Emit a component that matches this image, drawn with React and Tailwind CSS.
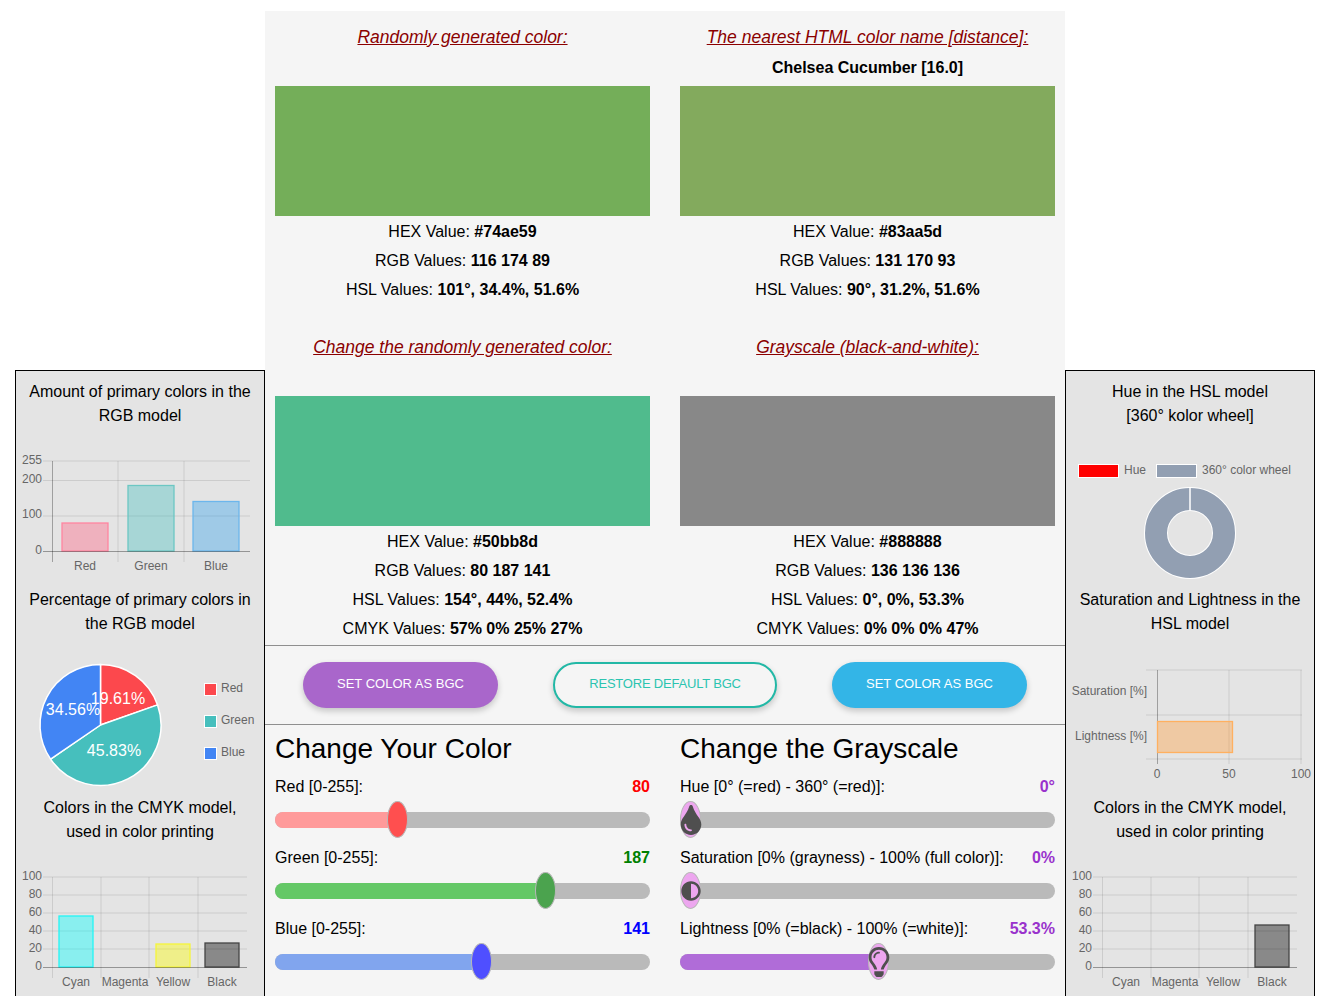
import React from "react";
import { FaTint, FaAdjust, FaRegLightbulb } from "react-icons/fa";

const G = "rgba(0,0,0,0.1)";
const Z = "rgba(0,0,0,0.3)";
const L = "#666";

function T({ x, y, a = "middle", c = L, s = 12, children }) {
  return <text x={x} y={y} textAnchor={a} fill={c} fontSize={s}>{children}</text>;
}

function RgbBars() {
  return (
    <svg width="248" height="160" viewBox="16 427 248 160" className="block">
      {[[461, "255", 464], [480.5, "200", 483], [516, "100", 518]].map(([y, t, ty]) => (
        <g key={t}>
          <line x1="43" x2="250" y1={y} y2={y} stroke={G} />
          <T x="42" y={ty} a="end">{t}</T>
        </g>
      ))}
      <T x="42" y="554" a="end">0</T>
      {[118, 184].map((x) => <line key={x} x1={x} x2={x} y1="461" y2="562" stroke={G} />)}
      <line x1="52.5" x2="52.5" y1="461" y2="562" stroke={Z} />
      <rect x="62" y="523" width="46" height="28" fill="rgba(255,99,132,0.4)" stroke="#ff85a0" strokeWidth="1.3" />
      <rect x="128" y="485.5" width="46" height="65.5" fill="rgba(75,192,192,0.4)" stroke="#6cc7c3" strokeWidth="1.3" />
      <rect x="193" y="501.5" width="46" height="49.5" fill="rgba(54,162,235,0.4)" stroke="#6cb6ec" strokeWidth="1.3" />
      <line x1="43" x2="250" y1="551.5" y2="551.5" stroke="rgba(0,0,0,0.35)" />
      <T x="85" y="570">Red</T>
      <T x="151" y="570">Green</T>
      <T x="216" y="570">Blue</T>
    </svg>
  );
}

function polar(cx, cy, r, p) {
  const a = (p / 100) * 2 * Math.PI - Math.PI / 2;
  return [cx + r * Math.cos(a), cy + r * Math.sin(a)];
}

function Slice({ from, to, fill }) {
  const [x1, y1] = polar(100.5, 725, 60.5, from);
  const [x2, y2] = polar(100.5, 725, 60.5, to);
  const large = to - from > 50 ? 1 : 0;
  return <path d={`M100.5 725 L${x1} ${y1} A60.5 60.5 0 ${large} 1 ${x2} ${y2} Z`} fill={fill} stroke="#fff" strokeWidth="1.5" />;
}

function Pie() {
  return (
    <svg width="248" height="160" viewBox="16 635 248 160" className="block">
      <Slice from={0} to={19.61} fill="#fc484d" />
      <Slice from={19.61} to={65.44} fill="#46bfbd" />
      <Slice from={65.44} to={100} fill="#4285f4" />
      <T x="118" y="704" c="#fff" s={16}>19.61%</T>
      <T x="114" y="756" c="#fff" s={16}>45.83%</T>
      <T x="73" y="715" c="#fff" s={16}>34.56%</T>
      {[[683, "#fc484d", "Red"], [715, "#46bfbd", "Green"], [747, "#4285f4", "Blue"]].map(([y, f, t]) => (
        <g key={t}>
          <rect x="204.5" y={y + 0.5} width="12" height="12" fill={f} stroke="#fff" />
          <T x="221" y={y + 9} a="start">{t}</T>
        </g>
      ))}
    </svg>
  );
}

function CmykBars({ bars }) {
  return (
    <svg width="248" height="160" viewBox="16 843 248 160" className="block">
      {[[877, "100"], [895, "80"], [913, "60"], [931, "40"], [949, "20"]].map(([y, t]) => (
        <g key={t}>
          <line x1="43" x2="247" y1={y} y2={y} stroke={G} />
          <T x="42" y={y + 3} a="end">{t}</T>
        </g>
      ))}
      <T x="42" y="970" a="end">0</T>
      {[101, 149, 198].map((x) => <line key={x} x1={x} x2={x} y1="877" y2="978" stroke={G} />)}
      <line x1="52.5" x2="52.5" y1="877" y2="978" stroke={G} />
      {bars.map((b) => (
        <rect key={b.x} x={b.x} y={b.y} width="34" height={967 - b.y} fill={b.f} stroke={b.s} strokeWidth="1.3" />
      ))}
      <line x1="43" x2="247" y1="967.5" y2="967.5" stroke="rgba(0,0,0,0.35)" />
      <T x="76" y="986">Cyan</T>
      <T x="125" y="986">Magenta</T>
      <T x="173" y="986">Yellow</T>
      <T x="222" y="986">Black</T>
    </svg>
  );
}

function Donut() {
  return (
    <svg width="248" height="160" viewBox="1066 427 248 160" className="block">
      <rect x="1078.5" y="464.5" width="40" height="13" fill="#ff0000" stroke="#fff" />
      <T x="1124" y="474" a="start">Hue</T>
      <rect x="1156.5" y="464.5" width="40" height="13" fill="#929fb2" stroke="#fff" />
      <T x="1202" y="474" a="start">360° color wheel</T>
      <circle cx="1190" cy="533" r="34" fill="none" stroke="#fff" strokeWidth="24" />
      <circle cx="1190" cy="533" r="34" fill="none" stroke="#929fb2" strokeWidth="22" />
      <line x1="1190" x2="1190" y1="488" y2="510" stroke="#fff" strokeWidth="1.5" />
    </svg>
  );
}

function HBars() {
  return (
    <svg width="248" height="160" viewBox="1066 635 248 160" className="block">
      {[670, 715, 759].map((y) => <line key={y} x1="1146" x2="1302" y1={y} y2={y} stroke={G} />)}
      {[1229, 1301].map((x) => <line key={x} x1={x} x2={x} y1="670" y2="764" stroke={G} />)}
      <line x1="1157.5" x2="1157.5" y1="670" y2="764" stroke="rgba(0,0,0,0.3)" />
      <rect x="1157.5" y="721.5" width="75" height="31" fill="rgba(255,159,64,0.4)" stroke="#ffb060" strokeWidth="1.3" />
      <T x="1147" y="695" a="end">Saturation [%]</T>
      <T x="1147" y="740" a="end">Lightness [%]</T>
      <T x="1157" y="778">0</T>
      <T x="1229" y="778">50</T>
      <T x="1301" y="778">100</T>
    </svg>
  );
}

function ChartBlock({ title, children }) {
  return (
    <div className="h-[208px]">
      <h4 className="h-[48px] pt-[1px] text-center text-[16px] leading-[24px] text-black">{title}</h4>
      {children}
    </div>
  );
}

function Sidebar({ children }) {
  return (
    <aside className="mt-[359px] h-[640px] w-[250px] shrink-0 border border-black bg-[#e4e4e4] pt-[8px]">
      {children}
    </aside>
  );
}

function Line({ label, value }) {
  return (
    <p className="text-center text-[16px] leading-[29px] text-black">
      {label} <b>{value}</b>
    </p>
  );
}

function Panel({ title, sub, color, lines, titleClass }) {
  return (
    <div>
      <h3 className={`text-center text-[17.5px] italic leading-[24px] text-[#8b0000] underline ${titleClass}`}>{title}</h3>
      <p className="mb-[6px] mt-[7px] text-center text-[16px] font-bold leading-[24px] text-black">{sub || "\u00a0"}</p>
      <div className={`h-[130px] ${color}`} />
      <div className="pt-[1px]">
        {lines.map(([l, v]) => <Line key={l} label={l} value={v} />)}
      </div>
    </div>
  );
}

function Slider({ label, value, valueClass, fillClass, fillWidth, thumbClass, thumbLeft, icon }) {
  return (
    <div className="h-[71px]">
      <div className="flex justify-between text-[16px] leading-[24px] text-black">
        <span>{label}</span>
        <b className={valueClass}>{value}</b>
      </div>
      <div className="relative mt-[13px] h-[16px] rounded-full bg-[#bababa]">
        <div className={`h-full rounded-full ${fillClass} ${fillWidth}`} />
        <div className={`absolute top-[-11px] flex h-[37px] w-[21px] items-center justify-center rounded-[50%] border-[1.5px] border-[#b8b8b8] text-[#4f4f4f] ${thumbClass} ${thumbLeft}`}>
          {icon}
        </div>
      </div>
    </div>
  );
}

function Button({ className, children }) {
  return (
    <button className={`flex h-[46px] items-center justify-center rounded-full pb-[2px] text-[13px] uppercase shadow-[0_3px_6px_rgba(0,0,0,0.2)] ${className}`}>
      {children}
    </button>
  );
}

export default function App() {
  return (
    <div className="flex h-[996px] w-[1325px] items-start overflow-hidden bg-white pl-[15px] pt-[11px] font-['Liberation_Sans',Arial,sans-serif]">
      <Sidebar>
        <ChartBlock title={<>Amount of primary colors in the<br />RGB model</>}><RgbBars /></ChartBlock>
        <ChartBlock title={<>Percentage of primary colors in<br />the RGB model</>}><Pie /></ChartBlock>
        <ChartBlock title={<>Colors in the CMYK model,<br />used in color printing</>}>
          <CmykBars bars={[
            { x: 59, y: 916, f: "rgba(0,255,255,0.4)", s: "#22f5f5" },
            { x: 156, y: 944, f: "rgba(255,255,0,0.4)", s: "#f5f53a" },
            { x: 205, y: 943, f: "rgba(0,0,0,0.4)", s: "#444" },
          ]} />
        </ChartBlock>
      </Sidebar>

      <main className="h-[985px] w-[800px] shrink-0 bg-[#f5f5f5]">
        <section className="grid h-[634px] grid-cols-2 content-start gap-x-[30px] px-[10px] pt-[14px]">
          <Panel
            title="Randomly generated color:"
            color="bg-[#74ae59]"
            lines={[["HEX Value:", "#74ae59"], ["RGB Values:", "116 174 89"], ["HSL Values:", "101°, 34.4%, 51.6%"]]}
          />
          <Panel
            title="The nearest HTML color name [distance]:"
            sub="Chelsea Cucumber [16.0]"
            color="bg-[#83aa5d]"
            lines={[["HEX Value:", "#83aa5d"], ["RGB Values:", "131 170 93"], ["HSL Values:", "90°, 31.2%, 51.6%"]]}
          />
          <Panel
            title="Change the randomly generated color:"
            color="bg-[#50bb8d]"
            titleClass="mt-[31px]"
            lines={[["HEX Value:", "#50bb8d"], ["RGB Values:", "80 187 141"], ["HSL Values:", "154°, 44%, 52.4%"], ["CMYK Values:", "57% 0% 25% 27%"]]}
          />
          <Panel
            title="Grayscale (black-and-white):"
            color="bg-[#888888]"
            titleClass="mt-[31px]"
            lines={[["HEX Value:", "#888888"], ["RGB Values:", "136 136 136"], ["HSL Values:", "0°, 0%, 53.3%"], ["CMYK Values:", "0% 0% 0% 47%"]]}
          />
        </section>

        <section className="flex h-[80px] items-center justify-between border-y border-[#8f8f8f] pl-[38px] pr-[38px]">
          <Button className="w-[195px] bg-[#a966cb] text-white">Set color as BGC</Button>
          <Button className="w-[224px] border-2 border-[#22b8a6] bg-[#f5f5f5] tracking-[-0.2px] text-[#2cc4b0]">Restore default BGC</Button>
          <Button className="w-[195px] bg-[#33b5e7] text-white">Set color as BGC</Button>
        </section>

        <section className="grid grid-cols-2 gap-x-[30px] px-[10px]">
          <div>
            <h2 className="mb-[9px] pt-[7px] text-[28px] leading-[34px] text-black">Change Your Color</h2>
            <Slider label="Red [0-255]:" value="80" valueClass="text-[#ff0000]" fillClass="bg-[#ff9a9a]" fillWidth="w-[125px]" thumbClass="bg-[#ff4f4f]" thumbLeft="left-[112px]" />
            <Slider label="Green [0-255]:" value="187" valueClass="text-[#008000]" fillClass="bg-[#64c866]" fillWidth="w-[270px]" thumbClass="bg-[#4ba34e]" thumbLeft="left-[260px]" />
            <Slider label="Blue [0-255]:" value="141" valueClass="text-[#0000ff]" fillClass="bg-[#81a5ee]" fillWidth="w-[206px]" thumbClass="bg-[#4f4fff]" thumbLeft="left-[196px]" />
          </div>
          <div>
            <h2 className="mb-[9px] pt-[7px] text-[28px] leading-[34px] text-black">Change the Grayscale</h2>
            <Slider label="Hue [0° (=red) - 360° (=red)]:" value="0°" valueClass="text-[#9932cc]" fillClass="bg-[#b06cd8]" fillWidth="w-0" thumbClass="bg-[#eda6ef]" thumbLeft="left-0" icon={<FaTint size={30} className="shrink-0" />} />
            <Slider label="Saturation [0% (grayness) - 100% (full color)]:" value="0%" valueClass="text-[#9932cc]" fillClass="bg-[#b06cd8]" fillWidth="w-0" thumbClass="bg-[#eda6ef]" thumbLeft="left-0" icon={<FaAdjust size={20} className="shrink-0" />} />
            <Slider label="Lightness [0% (=black) - 100% (=white)]:" value="53.3%" valueClass="text-[#9932cc]" fillClass="bg-[#b06cd8]" fillWidth="w-[198px]" thumbClass="bg-[#eda6ef]" thumbLeft="left-[188px]" icon={<FaRegLightbulb size={30} className="shrink-0" />} />
          </div>
        </section>
      </main>

      <Sidebar>
        <ChartBlock title={<>Hue in the HSL model<br />[360° kolor wheel]</>}><Donut /></ChartBlock>
        <ChartBlock title={<>Saturation and Lightness in the<br />HSL model</>}><HBars /></ChartBlock>
        <ChartBlock title={<>Colors in the CMYK model,<br />used in color printing</>}>
          <CmykBars bars={[{ x: 205, y: 925, f: "rgba(0,0,0,0.4)", s: "#444" }]} />
        </ChartBlock>
      </Sidebar>
    </div>
  );
}
